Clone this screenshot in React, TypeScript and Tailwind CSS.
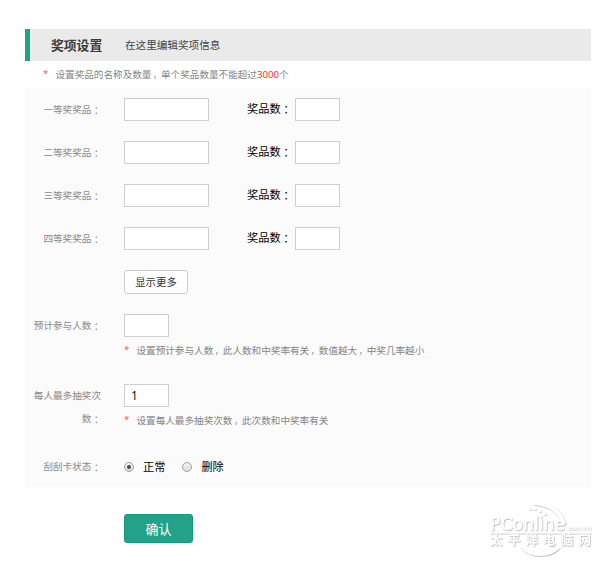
import React from "react";

const prizes = ["一等奖奖品", "二等奖奖品", "三等奖奖品", "四等奖奖品"];

const Colon = () => (
  <span className="align-[-1px] font-['Noto_Sans_CJK_JP',sans-serif] leading-none">
    ：
  </span>
);

const Comma = () => (
  <span className="pl-[1.6px] text-[8px] leading-none">，</span>
);

const Label = ({ children }: { children: React.ReactNode }) => (
  <div className="ml-2 w-[68px] shrink-0 text-right text-[9.6px] leading-[23px] text-[#8a8a8a]">
    {children}
  </div>
);

const TextInput = ({
  className,
  value,
}: {
  className: string;
  value?: string;
}) => (
  <input
    type="text"
    defaultValue={value}
    className={`h-[23px] shrink-0 border border-[#cfcfcf] bg-white px-1.5 text-[12px] text-black outline-none ${className}`}
  />
);

const Hint = ({ children }: { children: React.ReactNode }) => (
  <p className="flex h-4 whitespace-nowrap text-[9.6px] leading-4 text-[#858585]">
    <span className="w-[12.5px] font-['Open_Sans',sans-serif] text-[#ff4a3d]">
      *
    </span>
    <span>{children}</span>
  </p>
);

const Radio = ({ label, checked }: { label: string; checked?: boolean }) => (
  <label className="flex items-center text-[11.2px] leading-4 text-black">
    <span className="flex size-[10px] items-center justify-center rounded-full border border-[#a0a0a0] bg-linear-to-b from-[#f4f4f4] to-[#dedede]">
      <input
        type="radio"
        name="status"
        defaultChecked={checked}
        className="size-1 appearance-none rounded-full checked:bg-[#484848]"
      />
    </span>
    <span className="-mt-0.5 ml-[9px]">{label}</span>
  </label>
);

const Watermark = () => (
  <svg
    width="108"
    height="60"
    viewBox="0 0 108 60"
    className="absolute top-[500px] left-[487px]"
  >
    <defs>
      <filter id="relief" x="-10%" y="-10%" width="120%" height="120%">
        <feDropShadow
          dx="0.6"
          dy="0.7"
          stdDeviation="0.7"
          floodColor="#888888"
          floodOpacity="0.75"
        />
      </filter>
    </defs>
    <g fill="#fff" filter="url(#relief)">
      <path d="M45 5 C61 0 76 10 79 24 L75 24 C72 13 61 5 45 5Z" />
      <path d="M33 47 C42 59 64 59 74 47 C63 54 45 54 33 47Z" />
      <circle cx="43" cy="9" r="1" />
      <circle cx="48" cy="9" r="1.1" />
      <circle cx="53" cy="11" r="1.2" />
      <circle cx="58" cy="14" r="1.3" />
      <text
        x="3"
        y="30"
        textLength="75"
        lengthAdjust="spacingAndGlyphs"
        strokeWidth="0.5"
        stroke="#fff"
        className="font-['DejaVu_Sans',sans-serif] text-[17px]"
      >
        PConline
      </text>
      <text
        x="80"
        y="30"
        textLength="24"
        lengthAdjust="spacingAndGlyphs"
        className="font-['DejaVu_Sans',sans-serif] text-[6px]"
      >
        .com.cn
      </text>
      <rect x="3" y="32.5" width="101" height="1" />
      <text
        x="3"
        y="44.5"
        textLength="101"
        className="font-['Noto_Sans_CJK_SC',sans-serif] text-[12.5px] font-bold"
      >
        太平洋电脑网
      </text>
    </g>
  </svg>
);

const App = () => {
  return (
    <div className="relative h-[564px] w-[600px] overflow-hidden bg-white pt-[29px] pr-[9px] pl-[25px] font-['Noto_Sans_CJK_SC',sans-serif]">
      <header className="flex h-8 items-center border-l-[5px] border-[#1fa387] bg-[#eaeaea] pl-[21px]">
        <h1 className="w-[74px] text-[12.8px] font-bold text-[#3a3a3a]">
          奖项设置
        </h1>
        <p className="text-[10.6px] text-[#444]">在这里编辑奖项信息</p>
      </header>
      <div className="h-[27px] pt-[5px] pl-[18px]">
        <Hint>
          设置奖品的名称及数量
          <Comma />
          单个奖品数量不能超过
          <span className="font-['Open_Sans',sans-serif] text-[#ff1a1a]">
            3000
          </span>
          个
        </Hint>
      </div>

      <section className="h-[399px] bg-[#fbfbfb] pt-2.5">
        <div className="flex flex-col gap-5">
          {prizes.map((name) => (
            <div key={name} className="flex h-[23px]">
              <Label>
                {name}
                <Colon />
              </Label>
              <TextInput className="ml-[23px] w-[85px]" />
              <span className="ml-[38px] w-[48px] text-[11.2px] leading-[21px] text-black">
                奖品数
                <Colon />
              </span>
              <TextInput className="w-[45px]" />
            </div>
          ))}
        </div>

        <button className="mt-5 ml-[99px] block h-6 w-[64px] rounded-[3px] border border-[#cccccc] bg-white text-[10.4px] text-[#333]">
          显示更多
        </button>

        <div className="mt-5 flex h-[45px]">
          <Label>
            预计参与人数
            <Colon />
          </Label>
          <div className="ml-[23px]">
            <TextInput className="block w-[45px]" />
            <div className="mt-[5px]">
              <Hint>
                设置预计参与人数
                <Comma />
                此人数和中奖率有关
                <Comma />
                数值越大
                <Comma />
                中奖几率越小
              </Hint>
            </div>
          </div>
        </div>

        <div className="mt-[25px] flex h-[46px]">
          <Label>
            每人最多抽奖次
            <br />数
            <Colon />
          </Label>
          <div className="ml-[23px]">
            <TextInput
              className="block w-[45px] font-['Open_Sans',sans-serif]"
              value="1"
            />
            <div className="mt-[5px]">
              <Hint>
                设置每人最多抽奖次数
                <Comma />
                此次数和中奖率有关
              </Hint>
            </div>
          </div>
        </div>

        <div className="mt-[25px] flex h-[23px] items-center">
          <Label>
            刮刮卡状态
            <Colon />
          </Label>
          <div className="ml-[23px] flex gap-[17px]">
            <Radio label="正常" checked />
            <Radio label="删除" />
          </div>
        </div>
      </section>

      <button className="mt-[27px] ml-[99px] block h-[29px] w-[69px] rounded-[3px] border border-[#16967a] bg-[#24a189] text-[13px] text-white">
        确认
      </button>
      <Watermark />
    </div>
  );
};

export default App;
